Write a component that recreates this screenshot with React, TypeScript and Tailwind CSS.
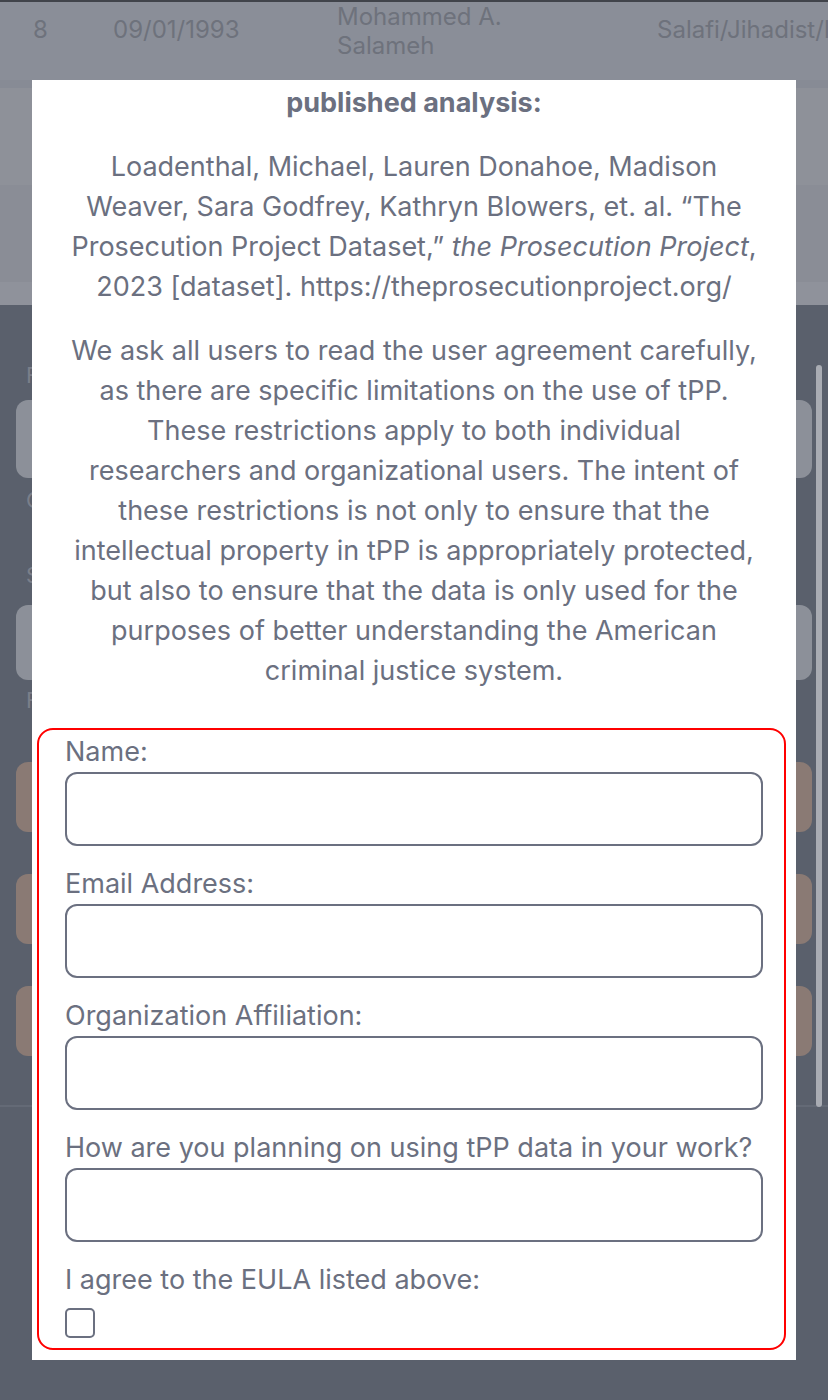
import React from 'react'

const fields = [
  'Name:',
  'Email Address:',
  'Organization Affiliation:',
  'How are you planning on using tPP data in your work?',
]

const agreementLines = [
  'We ask all users to read the user agreement carefully,',
  'as there are specific limitations on the use of tPP.',
  'These restrictions apply to both individual',
  'researchers and organizational users. The intent of',
  'these restrictions is not only to ensure that the',
  'intellectual property in tPP is appropriately protected,',
  'but also to ensure that the data is only used for the',
  'purposes of better understanding the American',
  'criminal justice system.',
]

function BackdropPage() {
  return (
    <div className="flex h-full flex-col">
      <div className="h-[2px] bg-[#41444b]" />
      <div className="flex h-[78px] items-start overflow-hidden bg-[#8a8e98] text-[24px] leading-[29px] text-[#6e727c]">
        <span className="mt-[13px] w-[80px] shrink-0 pl-[33px]">8</span>
        <span className="mt-[13px] w-[224px] shrink-0 pl-[33px]">09/01/1993</span>
        <span className="w-[320px] shrink-0 pl-[33px]">
          Mohammed A.
          <br />
          Salameh
        </span>
        <span className="mt-[13px] shrink-0 whitespace-nowrap pl-[33px]">Salafi/Jihadist/Islamist</span>
      </div>
      <div className="h-[105px] border-t-[8px] border-[#878b95] bg-[#8e9199]" />
      <div className="h-[97px] bg-[#8a8d96]" />
      <div className="h-[23px] bg-[#8f929b]" />

      <div className="relative flex flex-1 flex-col bg-[#5a606c]">
        <div className="flex flex-col pl-4 pr-4 pt-[56px] text-[22px] leading-[28px] text-[#7a7f8a]">
          <span className="pl-[10px]">Filter</span>
          <div className="mt-[11px] h-[78px] rounded-xl bg-[#8c9099]" />
          <span className="mt-[8px] pl-[10px]">Clear</span>
          <span className="mt-[47px] pl-[10px]">Sort</span>
          <div className="mt-[16px] h-[75px] rounded-xl bg-[#8c9099]" />
          <span className="mt-[6px] pl-[10px]">Filters</span>
          <div className="mt-[48px] flex flex-col gap-[42px]">
            <div className="h-[70px] rounded-xl bg-[#8a7a74]" />
            <div className="h-[70px] rounded-xl bg-[#8a7a74]" />
            <div className="h-[70px] rounded-xl bg-[#8a7a74]" />
          </div>
        </div>
        <div className="mt-[49px] h-[2px] bg-[#646a76]" />
        <div className="absolute right-[6px] top-[60px] h-[742px] w-[6px] rounded-full bg-[#a9acb3]" />
      </div>
    </div>
  )
}

export default function App() {
  return (
    <div
      className="relative h-[1400px] w-[828px] overflow-hidden bg-[#5a606c]"
      style={{ fontFamily: 'Inter, "Noto Sans", sans-serif' }}
    >
      <BackdropPage />

      <div className="absolute left-[32px] top-[80px] h-[1280px] w-[764px] overflow-hidden bg-white text-[#6b7080]">
        <div className="flex flex-col pt-[3px] text-center text-[27px] leading-[40px]">
          <p className="font-bold">published analysis:</p>
          <p className="mt-6 flex flex-col whitespace-nowrap">
            <span>Loadenthal, Michael, Lauren Donahoe, Madison</span>
            <span>Weaver, Sara Godfrey, Kathryn Blowers, et. al. “The</span>
            <span>
              Prosecution Project Dataset,” <em>the Prosecution Project</em>,
            </span>
            <span>2023 [dataset]. https://theprosecutionproject.org/</span>
          </p>
          <p className="mt-6 flex flex-col whitespace-nowrap">
            {agreementLines.map((line) => (
              <span key={line}>{line}</span>
            ))}
          </p>
        </div>

        <form className="ml-[5px] mr-[10px] mt-[37px] flex flex-col gap-[22px] rounded-2xl border-2 border-[#ff0000] pb-[10px] pl-[26px] pr-[21px] pt-[6px] text-[27px] leading-[32px]">
          {fields.map((label) => (
            <label key={label} className="flex flex-col gap-1">
              <span className="whitespace-nowrap">{label}</span>
              <input
                type="text"
                className="h-[74px] rounded-xl border-2 border-[#6b7080] bg-white px-3 outline-none"
              />
            </label>
          ))}
          <label className="flex flex-col gap-3">
            <span>I agree to the EULA listed above:</span>
            <span className="block h-[30px] w-[30px] rounded-[5px] border-2 border-[#6b7080]" />
          </label>
        </form>
      </div>
    </div>
  )
}
